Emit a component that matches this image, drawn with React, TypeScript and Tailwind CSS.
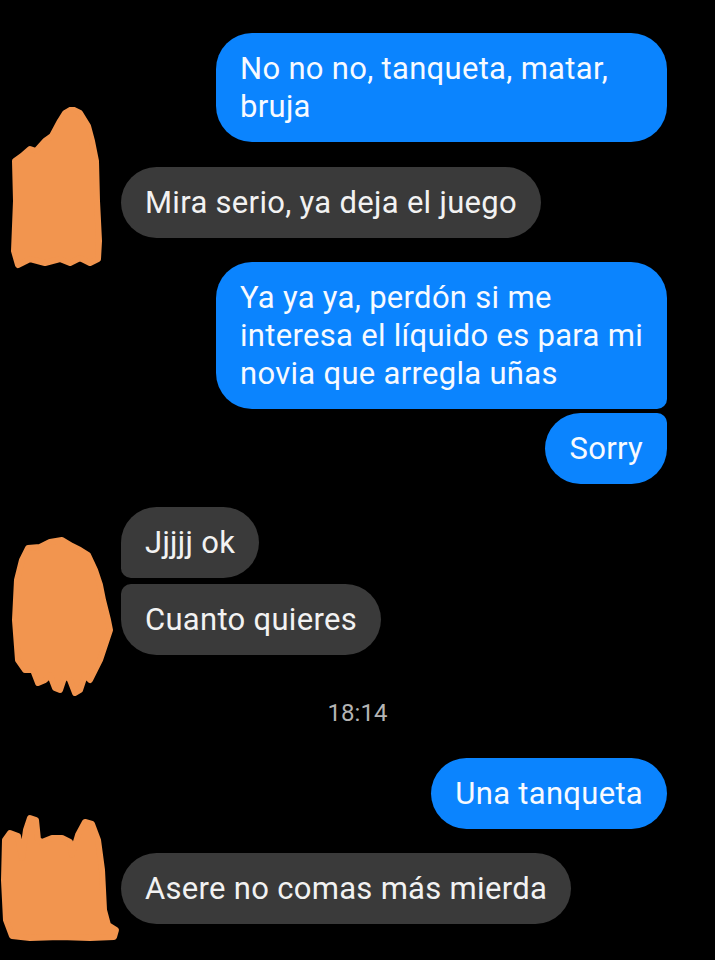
import type { ReactNode } from "react";

const ORANGE = "#f2954f";

type Scribble = { points: string; viewBox: string; top: string; height: number };

const scribbles: Record<string, Scribble> = {
  a: {
    viewBox: "0 106 121 162",
    top: "top-[-60px]",
    height: 162,
    points:
      "15,160 22,155 30,148 36,150 45,140 52,135 60,120 65,112 72,108 80,112 88,125 92,140 96,160 97,200 99,240 98,258 90,262 80,257 70,262 60,258 45,262 30,258 18,264 14,250 16,200",
  },
  b: {
    viewBox: "0 536 121 160",
    top: "top-[29px]",
    height: 160,
    points:
      "22,560 28,548 40,547 50,542 62,540 72,546 80,550 88,555 95,570 100,585 103,600 108,620 110,630 105,645 100,660 95,670 90,680 85,675 80,690 75,693 70,680 65,675 60,690 55,688 50,675 45,680 38,683 33,670 25,670 18,660 15,620 17,580",
  },
  c: {
    viewBox: "0 814 121 130",
    top: "top-[-39px]",
    height: 130,
    points:
      "5,840 10,833 18,836 22,858 26,830 30,818 36,820 38,840 42,842 52,838 62,838 70,842 72,855 78,835 85,822 92,824 98,840 102,870 104,910 108,925 116,930 114,937 90,938 60,937 30,938 12,936 6,920 4,880",
  },
};

function Blob({ s }: { s: Scribble }) {
  return (
    <svg
      aria-hidden="true"
      className={`pointer-events-none absolute left-0 ${s.top}`}
      width={121}
      height={s.height}
      viewBox={s.viewBox}
    >
      <polygon points={s.points} fill={ORANGE} stroke={ORANGE} strokeWidth={6} strokeLinejoin="round" />
    </svg>
  );
}

function Out({ children, className = "" }: { children: ReactNode; className?: string }) {
  return (
    <div className={`flex justify-end pr-[48px] ${className}`}>
      <div className="max-w-[451px] rounded-[36px] bg-[#0b84fe] px-[24px] py-[16.5px] text-[#f7faff]">{children}</div>
    </div>
  );
}

function In({ children, className = "", radius = "rounded-[36px]" }: { children: ReactNode; className?: string; radius?: string }) {
  return (
    <div className={`flex ${className}`}>
      <div className={`max-w-[480px] ${radius} bg-[#3a3a3a] px-[24px] py-[16.5px] text-[#f2f2f2]`}>{children}</div>
    </div>
  );
}

export default function App() {
  return (
    <div
      className="min-h-[960px] w-[715px] bg-black pt-[33px] text-[31px] leading-[38px] tracking-[0.3px]"
      style={{ fontFamily: "Roboto, 'Noto Sans', sans-serif" }}
    >
      <Out>No no no, tanqueta, matar, bruja</Out>

      <div className="relative mt-[25px] pl-[121px]">
        <Blob s={scribbles.a} />
        <In>Mira serio, ya deja el juego</In>
      </div>

      <div className="mt-[24px]">
        <div className="flex justify-end pr-[48px]">
          <div className="max-w-[451px] rounded-[36px] rounded-br-[10px] bg-[#0b84fe] px-[24px] py-[16.5px] text-[#f7faff]">
            Ya ya ya, perdón si me interesa el líquido es para mi novia que arregla uñas
          </div>
        </div>
        <div className="mt-[4px] flex justify-end pr-[48px]">
          <div className="rounded-[36px] rounded-tr-[10px] bg-[#0b84fe] px-[24px] py-[16.5px] text-[#f7faff]">Sorry</div>
        </div>
      </div>

      <div className="relative mt-[23px] pl-[121px]">
        <Blob s={scribbles.b} />
        <In radius="rounded-[36px] rounded-bl-[10px]">Jjjjj ok</In>
        <In className="mt-[6px]" radius="rounded-[36px] rounded-tl-[10px]">
          Cuanto quieres
        </In>
      </div>

      <div className="mt-[44px] text-center text-[24px] leading-[28px] tracking-normal text-[#b4b4b4]">18:14</div>

      <Out className="mt-[31px]">Una tanqueta</Out>

      <div className="relative mt-[24px] pl-[121px]">
        <Blob s={scribbles.c} />
        <In>Asere no comas más mierda</In>
      </div>
    </div>
  );
}
